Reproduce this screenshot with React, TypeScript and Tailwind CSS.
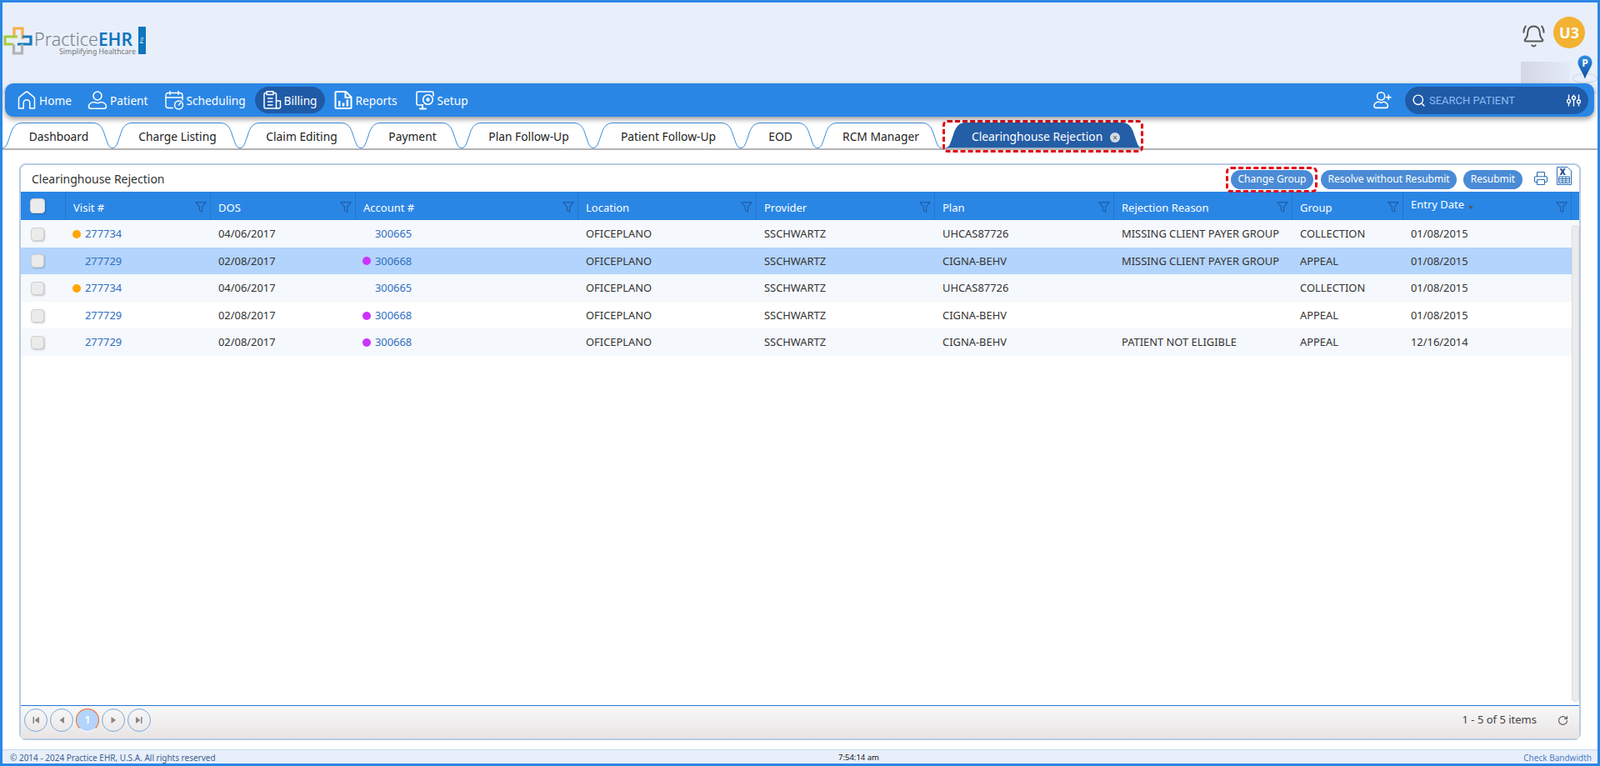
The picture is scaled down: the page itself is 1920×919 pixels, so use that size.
import { BellRing, Printer, RotateCw, Search } from 'lucide-react';

const navItems = [
    { label: 'Home', icon: HomeIcon },
    { label: 'Patient', icon: PatientIcon },
    { label: 'Scheduling', icon: ScheduleIcon },
    { label: 'Billing', icon: BillingIcon, active: true },
    { label: 'Reports', icon: ReportsIcon, wide: true },
    { label: 'Setup', icon: SetupIcon },
];

const tabs = [
    { label: 'Dashboard', width: 132 },
    { label: 'Charge Listing', width: 153 },
    { label: 'Claim Editing', width: 145 },
    { label: 'Payment', width: 121 },
    { label: 'Plan Follow-Up', width: 158 },
    { label: 'Patient Follow-Up', width: 177 },
    { label: 'EOD', width: 92 },
    { label: 'RCM Manager', width: 149 },
];

const columns = [
    { label: 'Visit #' },
    { label: 'DOS' },
    { label: 'Account #' },
    { label: 'Location' },
    { label: 'Provider' },
    { label: 'Plan' },
    { label: 'Rejection Reason' },
    { label: 'Group' },
    { label: 'Entry Date', sorted: true },
];

const rows = [
    { visit: '277734', visitDot: true, dos: '04/06/2017', account: '300665', accountDot: false, plan: 'UHCAS87726', reason: 'MISSING CLIENT PAYER GROUP', group: 'COLLECTION', entry: '01/08/2015', bg: 'bg-[#f5f8fc]' },
    { visit: '277729', visitDot: false, dos: '02/08/2017', account: '300668', accountDot: true, plan: 'CIGNA-BEHV', reason: 'MISSING CLIENT PAYER GROUP', group: 'APPEAL', entry: '01/08/2015', bg: 'bg-[#b3d4fc]' },
    { visit: '277734', visitDot: true, dos: '04/06/2017', account: '300665', accountDot: false, plan: 'UHCAS87726', reason: '', group: 'COLLECTION', entry: '01/08/2015', bg: 'bg-[#f5f8fc]' },
    { visit: '277729', visitDot: false, dos: '02/08/2017', account: '300668', accountDot: true, plan: 'CIGNA-BEHV', reason: '', group: 'APPEAL', entry: '01/08/2015', bg: 'bg-white' },
    { visit: '277729', visitDot: false, dos: '02/08/2017', account: '300668', accountDot: true, plan: 'CIGNA-BEHV', reason: 'PATIENT NOT ELIGIBLE', group: 'APPEAL', entry: '12/16/2014', bg: 'bg-[#f5f8fc]' },
];

const gridCols = 'grid grid-cols-[54px_174px_174px_267px_214px_214px_215px_214px_133px_202px]';

function HomeIcon() {
    return (
        <svg width="24" height="24" viewBox="0 0 24 24" fill="none" stroke="white" strokeWidth="1.5" strokeLinejoin="round">
            <path d="M2.500 22V10.500C2.500 9.500 3 8.800 3.800 8.200L10.300 2.800C11.300 2 12.700 2 13.700 2.800L20.200 8.200C21 8.800 21.500 9.500 21.500 10.500V22H15.800V15.500a3.800 3.800 0 0 0-7.600 0V22Z" />
        </svg>
    );
}

function PatientIcon() {
    return (
        <svg width="24" height="24" viewBox="0 0 24 24" fill="none" stroke="white" strokeWidth="1.6">
            <circle cx="12" cy="7" r="5" />
            <path d="M1.500 19.500c0-3 3.500-5 6.500-5 1 0 2.300 1 4 1s3-1 4-1c3 0 6.500 2 6.500 5 0 1.500-1 2.700-2.500 2.700H4c-1.500 0-2.500-1.200-2.500-2.700Z" />
        </svg>
    );
}

function ScheduleIcon() {
    return (
        <svg width="24" height="24" viewBox="0 0 24 24" fill="none" stroke="white" strokeWidth="1.4" strokeLinecap="round">
            <path d="M10.500 21.500H5A3 3 0 0 1 2 18.500V6A3 3 0 0 1 5 3.500H19A3 3 0 0 1 22 6V12" />
            <path d="M2 9H22M7 1.500V5.500M17 1.500V5.500" />
            <circle cx="17.500" cy="18" r="5" />
            <path d="M17.500 18L19.500 15.500" />
        </svg>
    );
}

function BillingIcon() {
    return (
        <svg width="24" height="24" viewBox="0 0 24 24" fill="none" stroke="white" strokeWidth="1.5" strokeLinejoin="round">
            <path d="M6 3.500H4.500A1.500 1.500 0 0 0 3 5V20.500A1.500 1.500 0 0 0 4.500 22H20.500A2 2 0 0 0 22.500 20V13H17.500V5A1.500 1.500 0 0 0 16 3.500H14" />
            <path d="M6 1.800H14V5.500H6ZM7 10H13.500M7 14H13.500M7 18H13.500M17.500 13V20A2 2 0 0 0 19.500 22" />
        </svg>
    );
}

function ReportsIcon() {
    return (
        <svg width="24" height="24" viewBox="0 0 24 24" fill="none" stroke="white" strokeWidth="2" strokeLinejoin="round">
            <path d="M2.500 3A1 1 0 0 1 3.500 2H15L21.500 8.500V21A1 1 0 0 1 20.500 22H3.500A1 1 0 0 1 2.500 21Z" />
            <path d="M14.500 2V9H21.500" />
            <path d="M6 13H8.500V19.500H6ZM10.800 15.500H13.300V19.500H10.800ZM15.600 11.500H18.100V19.500H15.600Z" fill="white" stroke="none" />
        </svg>
    );
}

function SetupIcon() {
    return (
        <svg width="24" height="24" viewBox="0 0 24 24" fill="none" stroke="white" strokeWidth="1.600" strokeLinecap="round">
            <path d="M9.500 18H3.500A1.500 1.500 0 0 1 2 16.500V3.500A1.500 1.500 0 0 1 3.500 2H20.500A1.500 1.500 0 0 1 22 3.500V7" />
            <circle cx="15.500" cy="11.500" r="5.800" />
            <circle cx="15.500" cy="11.500" r="1.400" />
            <path d="M9 18V21M6 22.500H13" strokeWidth="2" />
        </svg>
    );
}

function UserPlusIcon() {
    return (
        <svg width="22" height="22" viewBox="0 0 24 24" fill="none" stroke="white" strokeWidth="1.700">
            <circle cx="10" cy="7" r="5" />
            <path d="M1 19.500c0-3 3-5 6-5 1 0 1.500 1 3 1s2-1 3-1c3 0 6 2 6 5 0 1.500-1 2.700-2.500 2.700h-13C2 22.200 1 21 1 19.500Z" />
            <path d="M20 5V12M16.500 8.500H23.500" />
        </svg>
    );
}

function SliderIcon() {
    return (
        <svg width="17" height="15" viewBox="0 0 17 15" fill="none" stroke="white" strokeWidth="1.400">
            <path d="M2.500 0.500V6M2.500 11V14.500M8.500 0.500V2M8.500 7V14.500M14.500 0.500V6.500M14.500 11.500V14.500" />
            <circle cx="2.500" cy="8.500" r="2" />
            <circle cx="8.500" cy="4.500" r="2" />
            <circle cx="14.500" cy="9" r="2" />
        </svg>
    );
}

function FilterIcon() {
    return (
        <svg width="14" height="13" viewBox="0 0 14 13" fill="none" stroke="#1f5fa8" strokeWidth="1.200" strokeLinejoin="round">
            <path d="M0.800 0.700H13.200L8.600 6.200V12.300L5.400 10.500V6.200Z" />
        </svg>
    );
}

function LogoMark() {
    return (
        <svg width="35" height="34" viewBox="0 0 35 34" fill="none" strokeWidth="3.200">
            <path d="M13 13V2H23V15" stroke="#f5b04a" />
            <path d="M17 12H2V21H12" stroke="#a4cd3d" />
            <path d="M23 12H33V21H17" stroke="#1779ba" />
            <path d="M12.500 21V32H22.500V21" stroke="#b2b2b2" />
        </svg>
    );
}

function MapPin() {
    return (
        <svg width="18" height="29" viewBox="0 0 18 29" className="absolute left-[1890px] top-[63px]">
            <defs>
                <linearGradient id="pin" x1="0" y1="0" x2="0" y2="1">
                    <stop offset="0" stopColor="#2f8de4" />
                    <stop offset="1" stopColor="#0f4f9e" />
                </linearGradient>
            </defs>
            <path d="M9 0.500C4.200 0.500 0.500 4.200 0.500 9C0.500 14 5.500 19 9 28.500C12.500 19 17.500 14 17.500 9C17.500 4.200 13.800 0.500 9 0.500Z" fill="url(#pin)" />
            <text x="9" y="14" textAnchor="middle" fontSize="12" fontWeight="700" fill="white" fontFamily="Open Sans, sans-serif">P</text>
        </svg>
    );
}

function TabShape({ width, fill, stroke }: { width: number; fill: string; stroke: string }) {
    const w = width;
    const d = `M0 30.500C5 30.500 6 24 9 16C12 6 15 0.500 24 0.500L${w - 24} 0.500C${w - 15} 0.500 ${w - 12} 6 ${w - 9} 16C${w - 6} 24 ${w - 5} 30.500 ${w} 30.500`;
    return (
        <svg width={w} height="31" viewBox={`0 0 ${w} 31`} className="absolute left-0 top-0">
            <path d={d} fill={fill} stroke={stroke} strokeWidth="1" />
        </svg>
    );
}

function PagerButton({ path }: { path: string }) {
    return (
        <button className="flex h-[28px] w-[28px] items-center justify-center rounded-full border border-[#7aa9df] bg-transparent">
            <svg width="10" height="10" viewBox="0 0 10 10" fill="#8a8583">
                <path d={path} />
            </svg>
        </button>
    );
}

function Checkbox({ large }: { large?: boolean }) {
    return (
        <span className={`block rounded-[4px] border border-[#d0d0d0] bg-[#ebebeb] shadow-[1px_1px_2px_rgba(0,0,0,0.2)] ${large ? 'h-[18px] w-[18px]' : 'h-[16px] w-[16px]'}`} />
    );
}

export default function App() {
    return (
        <div className="relative flex h-[919px] w-[1920px] flex-col overflow-hidden border-[3px] border-[#2a86e5] bg-white [font-family:'Open_Sans',sans-serif]">
            <div className="absolute inset-x-0 top-0 h-[110px] bg-[#e8effb]" />

            {/* top strip: logo, bell, avatar */}
            <header className="relative h-[97px] shrink-0">
                <div className="absolute left-[1px] top-[29px]">
                    <LogoMark />
                </div>
                <div className="absolute left-[38px] top-[33px] flex items-baseline leading-[21px]">
                    <span className="text-[21.500px] font-light text-[#7b8087]">Practice</span>
                    <span className="text-[21px] font-semibold text-[#0f75bc]">EHR</span>
                </div>
                <div className="absolute left-[68px] top-[54px] whitespace-nowrap text-[8.700px] leading-[10px] text-[#777]">Simplifying Healthcare</div>
                <div className="absolute left-[163px] top-[29px] flex h-[33px] w-[9px] items-center justify-center bg-[#0f75bc]">
                    <span className="-rotate-90 text-[5px] leading-none text-white">Pro</span>
                </div>
                <BellRing size={29} strokeWidth={1.6} className="absolute left-[1823px] top-[26px] text-[#555]" />
                <div className="absolute left-[1861px] top-[17px] flex h-[38px] w-[38px] items-center justify-center rounded-full bg-[#f3b233] text-[18px] font-bold text-white">U3</div>
                <div className="absolute left-[1822px] top-[71px] h-[26px] w-[59px] bg-linear-to-r from-[#d4d8e5] to-[#e4e9f7]" />
                <div className="absolute left-[1884px] top-[85px] h-[12px] w-[30px] rounded-[50%] border border-[#cfd4de]" />
            </header>
            <MapPin />

            {/* main nav bar */}
            <nav className="relative z-10 ml-[3px] mr-[4px] flex h-[40px] shrink-0 items-center gap-[2px] rounded-[10px] bg-[#2a86e5] pl-[6px] pr-[7px] shadow-[0_3px_6px_rgba(0,0,0,0.4)]">
                {navItems.map((item) => {
                    const Icon = item.icon;
                    return (
                        <a key={item.label} className={`flex h-[32px] items-center gap-[3px] rounded-full pl-[8px] text-[13.700px] text-white ${item.wide ? 'pr-[11px]' : 'pr-[9px]'} ${item.active ? 'bg-[#1f5aa6]' : ''}`}>
                            <Icon />
                            <span className="pt-[2px]">{item.label}</span>
                        </a>
                    );
                })}
                <div className="ml-auto mr-[14px]">
                    <UserPlusIcon />
                </div>
                <div className="flex h-[33px] w-[220px] items-center rounded-full bg-[#1f5aa6] pl-[8px] pr-[9px]">
                    <Search size={17} strokeWidth={2} className="text-white" />
                    <span className="ml-[4px] pt-[1px] text-[13px] [font-family:Roboto,sans-serif] text-[#8cbcf5]">SEARCH PATIENT</span>
                    <span className="ml-auto">
                        <SliderIcon />
                    </span>
                </div>
            </nav>

            {/* module tabs */}
            <div className="relative flex h-[40px] shrink-0 items-end border-b-[2px] border-[#b4b4b4]">
                <div className="flex h-[31px] items-start">
                    {tabs.map((tab) => (
                        <div key={tab.label} className="relative flex h-[31px] items-center justify-center pl-[3px] pt-[4px] text-[13.800px] text-[#222]" style={{ width: tab.width }}>
                            <TabShape width={tab.width} fill="white" stroke="#3a8ad5" />
                            <span className="relative">{tab.label}</span>
                        </div>
                    ))}
                    <div className="relative ml-[5px] flex h-[31px] w-[235px] items-center pt-[4px] text-[13.800px] text-white">
                        <TabShape width={235} fill="#245ea6" stroke="#245ea6" />
                        <span className="relative ml-[31px]">Clearinghouse Rejection</span>
                        <span className="relative ml-[9px] flex h-[12px] w-[12px] items-center justify-center rounded-full bg-[#d5dbe5] text-[10px] leading-none text-[#555]">×</span>
                    </div>
                </div>
                <div className="absolute left-[1128px] top-[4px] h-[39px] w-[241px] rounded-[6px] border-[3px] border-dashed border-[#e30613]" />
            </div>

            {/* grid card */}
            <main className="mx-[20px] mt-[16px] flex h-[692px] w-[1874px] shrink-0 flex-col rounded-[8px] border-[2px] border-[#b8cbe4] bg-white">
                <div className="flex h-[32px] shrink-0 items-center pl-[13px]">
                    <span className="text-[14px] text-[#333]">Clearinghouse Rejection</span>
                    <div className="relative ml-auto mt-[2px]">
                        <button className="flex h-[23px] w-[99px] items-center justify-center rounded-full bg-[#4a8bd6] text-[12px] text-white">Change Group</button>
                        <div className="absolute -bottom-[4px] -left-[6px] -right-[5px] -top-[4px] rounded-[6px] border-[3px] border-dashed border-[#e30613]" />
                    </div>
                    <button className="ml-[9px] mt-[2px] flex h-[23px] w-[163px] items-center justify-center rounded-full bg-[#4a8bd6] text-[12px] text-white">Resolve without Resubmit</button>
                    <button className="ml-[8px] mt-[2px] flex h-[23px] w-[71px] items-center justify-center rounded-full bg-[#4a8bd6] text-[12px] text-white">Resubmit</button>
                    <Printer size={18} strokeWidth={1.5} className="ml-[13px] text-[#2a6fb5]" />
                    <svg width="18" height="22" viewBox="0 0 18 22" className="ml-[10px] mr-[9px] -mt-[6px]">
                        <path d="M0.500 0.500H13L17.500 5V21.500H0.500Z" fill="white" stroke="#2a6fb5" />
                        <text x="7" y="10" textAnchor="middle" fontSize="10" fontWeight="800" fill="#1f4f8f" fontFamily="Open Sans, sans-serif">X</text>
                        <path d="M2.500 12H15.500V19.500H2.500ZM2.500 14.500H15.500M2.500 17H15.500M7 12V19.500M11 12V19.500" fill="none" stroke="#2a6fb5" strokeWidth="1" />
                    </svg>
                </div>

                <div className={`${gridCols} h-[34px] shrink-0 bg-[#2a86e5] pr-[9px] text-[13px] text-white`}>
                    <div className="flex items-center border-r border-[#2576cb] pl-[11px]">
                        <Checkbox large />
                    </div>
                    {columns.map((col) => (
                        <div key={col.label} className="relative flex items-center border-r border-[#2576cb] pl-[9px] pt-[5px]">
                            <span className={col.sorted ? '-mt-[7px]' : ''}>{col.label}</span>
                            {col.sorted && <span className="-mt-[1px] ml-[5px] h-0 w-0 border-x-[3px] border-t-[4px] border-x-transparent border-t-[#555]" />}
                            <span className="absolute right-[4px] top-[12px]">
                                <FilterIcon />
                            </span>
                        </div>
                    ))}
                </div>

                <div className="relative flex-1">
                    {rows.map((row, i) => (
                        <div key={i} className={`${gridCols} h-[32.600px] pr-[9px] pt-[1px] text-[12.900px] text-[#333] ${row.bg}`}>
                            <div className="flex items-center pl-[12px]">
                                <Checkbox />
                            </div>
                            <div className="flex items-center pl-[8px]">
                                <span className={`h-[10px] w-[10px] rounded-full ${row.visitDot ? 'bg-[#ffa500]' : ''}`} />
                                <span className="ml-[5px] text-[#2f6fbf]">{row.visit}</span>
                            </div>
                            <div className="flex items-center pl-[9px]">{row.dos}</div>
                            <div className="flex items-center pl-[8px]">
                                <span className={`h-[10px] w-[10px] rounded-full ${row.accountDot ? 'bg-[#cc33ff]' : ''}`} />
                                <span className="ml-[5px] text-[#2f6fbf]">{row.account}</span>
                            </div>
                            <div className="flex items-center pl-[9px]">OFICEPLANO</div>
                            <div className="flex items-center pl-[9px]">SSCHWARTZ</div>
                            <div className="flex items-center pl-[9px]">{row.plan}</div>
                            <div className="flex items-center whitespace-nowrap pl-[9px]">{row.reason}</div>
                            <div className="flex items-center pl-[9px]">{row.group}</div>
                            <div className="flex items-center pl-[9px]">{row.entry}</div>
                        </div>
                    ))}
                    <div className="absolute bottom-[4px] right-0 top-[6px] w-[9px] rounded-full border border-[#dcdcdc] bg-[#ececec]" />
                </div>

                <div className="flex h-[40px] shrink-0 items-center border-t border-[#2a78d0] bg-linear-to-b from-[#f8f8f8] to-[#e8e4e4] pb-[5px] pl-[4px] pr-[13px] text-[13px] text-[#444]">
                    <div className="flex items-center gap-[3px]">
                        <PagerButton path="M1.500 1H3V9H1.500ZM9 1V9L3.500 5Z" />
                        <PagerButton path="M8 1V9L2.500 5Z" />
                        <span className="flex h-[28px] w-[28px] items-center justify-center rounded-full border border-[#f26a21] border-b-white bg-[#b3d4fc] text-[13px] font-semibold text-white">1</span>
                        <PagerButton path="M2.500 1V9L8 5Z" />
                        <PagerButton path="M1 1V9L6.500 5ZM7 1H8.500V9H7Z" />
                    </div>
                    <span className="ml-auto mr-[25px]">1 - 5 of 5 items</span>
                    <RotateCw size={13} strokeWidth={2} className="text-[#555]" />
                </div>
            </main>

            <footer className="relative mt-auto flex h-[17px] shrink-0 items-center border-t border-[#c3d5ea] bg-[#e8effb] pl-[9px] pr-[7px] pt-[1px] text-[10px] leading-none">
                <span className="text-[#3f5f8f]">© 2014 - 2024 Practice EHR, U.S.A. All rights reserved</span>
                <span className="absolute left-[1003px] text-[9.500px] text-[#111]">7:54:14 am</span>
                <span className="ml-auto text-[#4a7fc4]">Check Bandwidth</span>
            </footer>
        </div>
    );
}
